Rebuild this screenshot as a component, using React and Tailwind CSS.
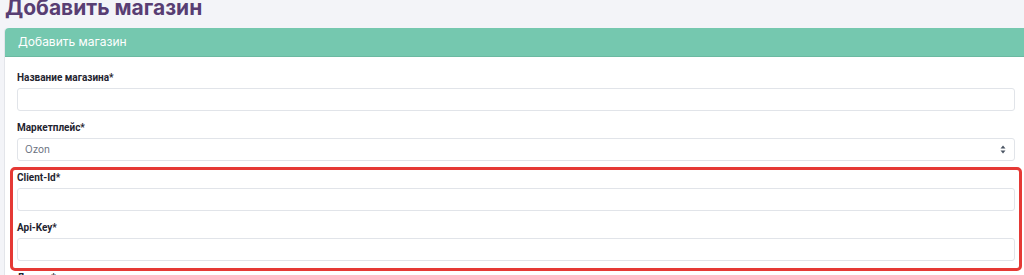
import React from 'react';

function Field({ label, children }) {
  return (
    <div className="mb-[10px]">
      <label className="block font-['Roboto',sans-serif] text-[10px] leading-[14px] font-bold text-[#1f2430] mb-[3px]">{label}</label>
      {children}
    </div>
  );
}

function TextInput() {
  return <div className="h-[23px] w-full rounded-[3px] border border-[#e1e4e9] bg-white" />;
}

function SelectInput({ value }) {
  return (
    <div className="h-[23px] w-full rounded-[3px] border border-[#e1e4e9] bg-white flex items-center justify-between pl-[7px] pr-[8px]">
      <span className="text-[10px] text-[#6b7280]">{value}</span>
      <svg width="6" height="9" viewBox="0 0 6 9">
        <path d="M3 0.5 L5.5 3.5 H0.5 Z" fill="#4b5563" />
        <path d="M3 8.5 L5.5 5.5 H0.5 Z" fill="#4b5563" />
      </svg>
    </div>
  );
}

export default function App() {
  return (
    <div className="w-[1024px] h-[275px] overflow-hidden bg-[#f3f4f8]" style={{ fontFamily: 'Inter, "Open Sans", sans-serif' }}>
      <h1 className="pl-[5px] mt-[-5px] h-[33px] text-[21px] leading-[26px] font-bold text-[#583e73]">Добавить магазин</h1>
      <div className="ml-[4px] w-[1026px] rounded-t-[4px] border-l border-[#e3e5ea] bg-white">
        <div className="h-[29px] rounded-t-[4px] bg-[#75c8af] border-b border-[#6bb9a1] flex items-center pl-[13px]">
          <span className="text-[12px] text-white">Добавить магазин</span>
        </div>
        <div className="relative pt-[14px] pl-[12px] pr-[10px]">
          <div className="w-[998px]">
            <Field label="Название магазина*"><TextInput /></Field>
            <Field label="Маркетплейс*"><SelectInput value="Ozon" /></Field>
            <Field label="Client-Id*"><TextInput /></Field>
            <Field label="Api-Key*"><TextInput /></Field>
            <Field label="Доступ*"><TextInput /></Field>
          </div>
          <div className="absolute left-[5px] top-[110px] w-[1012px] h-[104px] rounded-[5px] border-[3px] border-[#e53935]" />
        </div>
      </div>
    </div>
  );
}
